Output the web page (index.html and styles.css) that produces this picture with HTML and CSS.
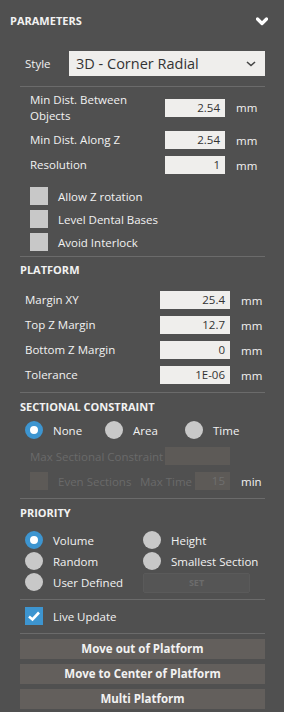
FILE: index.html
```html
<!DOCTYPE html>
<html lang="en">
<head>
    <meta charset="UTF-8">
    <title>Parameters</title>
    <link rel="stylesheet" href="styles.css">
</head>
<body>
    <div class="panel">
        <div class="panel-header">
            <span class="panel-title">PARAMETERS</span>
            <svg class="collapse" width="12" height="9" viewBox="0 0 12 9">
                <polyline points="1.5,2 6,6.5 10.5,2" fill="none" stroke="#fff" stroke-width="3.2" stroke-linejoin="round" stroke-linecap="round"/>
            </svg>
        </div>

        <div class="style-row">
            <span class="style-label">Style</span>
            <div class="select">
                <span>3D - Corner Radial</span>
                <svg width="10" height="6" viewBox="0 0 10 6">
                    <polyline points="1,1 5,4.5 9,1" fill="none" stroke="#444" stroke-width="1.6"/>
                </svg>
            </div>
        </div>

        <div class="section params">
            <div class="field tall">
                <span class="field-label">Min Dist. Between<br>Objects</span>
                <span class="input">2.54</span>
                <span class="unit">mm</span>
            </div>
            <div class="field">
                <span class="field-label">Min Dist. Along Z</span>
                <span class="input">2.54</span>
                <span class="unit">mm</span>
            </div>
            <div class="field">
                <span class="field-label">Resolution</span>
                <span class="input">1</span>
                <span class="unit">mm</span>
            </div>
            <div class="checks">
                <div class="check"><span class="box"></span>Allow Z rotation</div>
                <div class="check"><span class="box"></span>Level Dental Bases</div>
                <div class="check"><span class="box"></span>Avoid Interlock</div>
            </div>
        </div>

        <div class="section platform">
            <h2>PLATFORM</h2>
            <div class="field">
                <span class="field-label">Margin XY</span>
                <span class="input">25.4</span>
                <span class="unit">mm</span>
            </div>
            <div class="field">
                <span class="field-label">Top Z Margin</span>
                <span class="input">12.7</span>
                <span class="unit">mm</span>
            </div>
            <div class="field">
                <span class="field-label">Bottom Z Margin</span>
                <span class="input">0</span>
                <span class="unit">mm</span>
            </div>
            <div class="field">
                <span class="field-label">Tolerance</span>
                <span class="input">1E-06</span>
                <span class="unit">mm</span>
            </div>
        </div>

        <div class="section sectional">
            <h2>SECTIONAL CONSTRAINT</h2>
            <div class="radio-row">
                <div class="radio"><span class="dot on"></span>None</div>
                <div class="radio"><span class="dot"></span>Area</div>
                <div class="radio"><span class="dot"></span>Time</div>
            </div>
            <div class="disabled-row first">
                <span class="max-label">Max Sectional Constraint</span>
                <span class="input off wide"></span>
            </div>
            <div class="disabled-row">
                <span class="box off"></span>
                <span class="even-label">Even Sections</span>
                <span class="time-label">Max Time</span>
                <span class="input off short">15</span>
                <span class="unit">min</span>
            </div>
        </div>

        <div class="section priority">
            <h2>PRIORITY</h2>
            <div class="priority-grid">
                <div class="radio"><span class="dot on"></span>Volume</div>
                <div class="radio"><span class="dot"></span>Height</div>
                <div class="radio"><span class="dot"></span>Random</div>
                <div class="radio"><span class="dot"></span>Smallest Section</div>
                <div class="radio"><span class="dot"></span>User Defined</div>
                <div class="set-btn">SET</div>
            </div>
        </div>

        <div class="section live">
            <div class="check">
                <span class="box checked">
                    <svg width="14" height="12" viewBox="0 0 14 12">
                        <polyline points="2,6.5 5.5,9.5 12,2.5" fill="none" stroke="#fff" stroke-width="2.6"/>
                    </svg>
                </span>
                Live Update
            </div>
        </div>

        <div class="buttons">
            <div class="btn">Move out of Platform</div>
            <div class="btn">Move to Center of Platform</div>
            <div class="btn">Multi Platform</div>
        </div>
    </div>
</body>
</html>
```

FILE: styles.css
```css
body {
    margin: 0;
    background-color: #505050;
    font-family: "Open Sans", "DejaVu Sans", sans-serif;
    font-size: 11.5px;
    color: #f2f2f2;
}
.panel {
    width: 284px;
    height: 712px;
    overflow: hidden;
}
.panel-header {
    height: 40px;
    display: flex;
    align-items: center;
    justify-content: space-between;
    padding: 0 16px 0 10px;
}
.panel-title {
    font-weight: bold;
    font-size: 11px;
}
.collapse {
    margin-top: 2px;
}
.style-row {
    display: flex;
    align-items: center;
    margin: 11px 19px 0 25px;
    height: 25px;
}
.style-label {
    width: 44px;
}
.select {
    flex: 1;
    height: 25px;
    background-color: #efeeec;
    color: #333;
    font-size: 14.5px;
    display: flex;
    align-items: center;
    justify-content: space-between;
    padding: 0 9px 0 7px;
}
.section {
    margin: 0 19px 0 20px;
    border-top: 1px solid #6b6b6b;
}
.params {
    margin-top: 10px;
    padding: 4px 0 5px 10px;
    display: flex;
    flex-direction: column;
    gap: 7px;
}
.field {
    display: flex;
    align-items: center;
    height: 18px;
    white-space: nowrap;
}
.field.tall {
    height: 33px;
}
.field-label {
    line-height: 16px;
    width: 135px;
}
.input {
    width: 60px;
    height: 18px;
    line-height: 18px;
    background-color: #efeeec;
    color: #333;
    text-align: right;
    padding-right: 5px;
    box-sizing: border-box;
}
.unit {
    margin-left: 11px;
}
.checks {
    margin-top: 6px;
    display: flex;
    flex-direction: column;
    gap: 5px;
}
.check {
    display: flex;
    align-items: center;
    height: 18px;
}
.box {
    width: 18px;
    height: 18px;
    background-color: #c8c8c8;
    margin-right: 10px;
    display: flex;
    align-items: center;
    justify-content: center;
    flex-shrink: 0;
}
.box.checked {
    background-color: #3d95d0;
}
.box.off {
    background-color: #5d5a57;
}
h2 {
    margin: 0;
    font-size: 11px;
    font-weight: bold;
    line-height: 16px;
}
.platform {
    padding: 5px 0 8px 0;
}
.platform h2 {
    margin-bottom: 13px;
}
.platform .field {
    margin: 0 0 7px 5px;
}
.platform .field:last-child {
    margin-bottom: 0;
}
.platform .input {
    width: 70px;
}
.sectional {
    padding: 6px 0 8px 0;
}
.radio-row {
    display: flex;
    margin: 6px 0 0 5px;
}
.radio {
    display: flex;
    align-items: center;
    width: 80px;
    height: 18px;
    white-space: nowrap;
}
.dot {
    width: 18px;
    height: 18px;
    border-radius: 50%;
    background-color: #c8c8c8;
    margin-right: 10px;
    box-sizing: border-box;
    flex-shrink: 0;
}
.dot.on {
    background-color: #fff;
    border: 5px solid #3d95d0;
}
.disabled-row {
    display: flex;
    align-items: center;
    height: 18px;
    margin: 7px 0 0 10px;
    color: #6a6a6a;
    white-space: nowrap;
}
.disabled-row.first {
    margin-top: 8px;
}
.disabled-row .unit {
    color: #f2f2f2;
}
.max-label {
    width: 135px;
}
.input.off {
    background-color: #5d5a57;
    color: #6f6f6f;
}
.input.wide {
    width: 65px;
}
.input.short {
    width: 35px;
}
.even-label {
    width: 82px;
}
.time-label {
    width: 55px;
}
.priority {
    padding: 6px 0 6px 0;
}
.priority-grid {
    display: grid;
    grid-template-columns: 118px 107px;
    grid-template-rows: 18px 18px 20px;
    row-gap: 3px;
    margin: 10px 0 0 5px;
}
.priority .radio {
    width: auto;
}
.set-btn {
    background-color: #555;
    border: 1px solid #5a5a5a;
    border-radius: 2px;
    color: #6c6c6c;
    font-weight: bold;
    font-size: 9px;
    text-align: center;
    line-height: 18px;
}
.live {
    padding: 7px 0 8px 5px;
}
.buttons {
    border-top: 1px solid #6b6b6b;
    margin: 0 19px 0 20px;
    padding-top: 5px;
    display: flex;
    flex-direction: column;
    gap: 5px;
}
.btn {
    height: 20px;
    line-height: 20px;
    background-color: #635f5c;
    text-align: center;
    font-weight: bold;
    font-size: 11.5px;
}
```
